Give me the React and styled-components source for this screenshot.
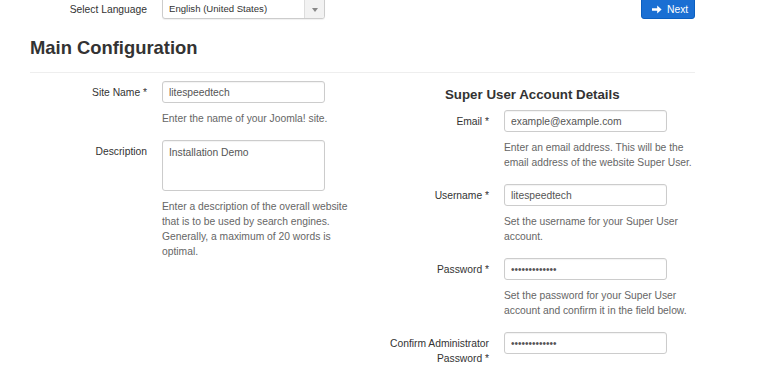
import React from "react";
import styled, { createGlobalStyle } from "styled-components";

const Global = createGlobalStyle`
  html, body { margin: 0; padding: 0; background: #fff; }
  body { font-family: "Liberation Sans", Arial, sans-serif; font-size: 10.3px; color: #333; overflow: hidden; }
  * { box-sizing: border-box; }
`;

const Page = styled.div`
  width: 770px;
  height: 380px;
  padding: 0 75px 0 30px;
  margin-top: -7px;
`;

const TopBar = styled.div`
  display: flex;
  justify-content: space-between;
  align-items: flex-end;
  height: 26px;
`;

const FieldRow = styled.div`
  display: grid;
  grid-template-columns: ${(p) => p.$labelW}px 163px;
  column-gap: 15px;
  align-items: start;
  margin-bottom: ${(p) => p.$mb ?? 14}px;
`;

const Label = styled.label`
  text-align: right;
  line-height: 15px;
  padding-top: ${(p) => p.$pt ?? 4}px;
  font-size: ${(p) => p.$fs ?? 10.3}px;
  color: #333;
`;

const SelectBox = styled.div`
  display: flex;
  height: 25px;
  border: 1px solid #ccc;
  border-radius: 3px;
  background: #fff;
  overflow: hidden;
  box-shadow: 0 1px 1px rgba(0,0,0,0.06);
`;

const SelectText = styled.div`
  flex: 1;
  padding: 7px 6px 0;
  font-size: 9.6px;
  color: #333;
  line-height: 14px;
`;

const SelectArrow = styled.div`
  width: 20px;
  background: #f2f2f2;
  border-left: 1px solid #ddd;
  display: flex;
  align-items: center;
  justify-content: center;
  padding-top: 6px;
`;

const NextButton = styled.button`
  display: flex;
  align-items: center;
  gap: 5px;
  height: 26px;
  width: 54px;
  padding: 6px 0 0 10px;
  border: 1px solid #0b5fc0;
  border-radius: 3px;
  background: #1a6fd3;
  color: #fff;
  font-family: "Liberation Sans", Arial, sans-serif;
  font-size: 10.3px;
`;

const Heading = styled.h1`
  margin: 19px 0 8px;
  font-size: 18.4px;
  line-height: 20px;
  font-weight: bold;
  color: #333;
  padding-bottom: 14px;
  border-bottom: 1px solid #eee;
`;

const Columns = styled.div`
  display: grid;
  grid-template-columns: 349px 316px;
`;

const Column = styled.div`
  padding-top: ${(p) => p.$pt ?? 0}px;
`;

const SubHeading = styled.h2`
  margin: 0 0 5px 66px;
  font-size: 13.3px;
  line-height: 20px;
  font-weight: bold;
  color: #333;
`;

const Field = styled.div`
  display: flex;
  flex-direction: column;
  gap: 8px;
`;

const TextInput = styled.input`
  width: 163px;
  height: 22px;
  padding: 0 6px;
  border: 1px solid #ccc;
  border-radius: 3px;
  font-family: "Liberation Sans", Arial, sans-serif;
  font-size: ${(p) => (p.type === "password" ? "10px" : "10.3px")};
  color: #555;
  box-shadow: inset 0 1px 1px rgba(0,0,0,0.05);
  outline: none;
`;

const TextArea = styled.textarea`
  width: 163px;
  height: 51px;
  padding: 4px 6px;
  border: 1px solid #ccc;
  border-radius: 3px;
  font-family: "Liberation Sans", Arial, sans-serif;
  font-size: 10.3px;
  line-height: 15px;
  color: #555;
  resize: none;
  box-shadow: inset 0 1px 1px rgba(0,0,0,0.05);
  outline: none;
`;

const Help = styled.div`
  width: 192px;
  line-height: 15px;
  color: #666;
`;

const ArrowIcon = () => (
  <svg width="10" height="9" viewBox="0 0 10 9">
    <path d="M0 3.3h5.2V0.6L9.6 4.5 5.2 8.4V5.7H0z" fill="#fff" />
  </svg>
);

const CaretIcon = () => (
  <svg width="6" height="4" viewBox="0 0 6 4">
    <path d="M0 0h6L3 4z" fill="#888" />
  </svg>
);

const Row = ({ labelW, label, children, mb, pt }) => (
  <FieldRow $labelW={labelW} $mb={mb}>
    <Label $pt={pt}>{label}</Label>
    <Field>{children}</Field>
  </FieldRow>
);

export default function App() {
  return (
    <>
      <Global />
      <Page>
        <TopBar>
          <FieldRow $labelW={117} $mb={0}>
            <Label $pt={8} $fs={10.3}>Select Language</Label>
            <SelectBox>
              <SelectText>English (United States)</SelectText>
              <SelectArrow><CaretIcon /></SelectArrow>
            </SelectBox>
          </FieldRow>
          <NextButton><ArrowIcon />Next</NextButton>
        </TopBar>
        <Heading>Main Configuration</Heading>
        <Columns>
          <Column>
            <Row labelW={117} label="Site Name *">
              <TextInput defaultValue="litespeedtech" />
              <Help>Enter the name of your Joomla! site.</Help>
            </Row>
            <Row labelW={117} label="Description">
              <TextArea defaultValue="Installation Demo" />
              <Help>Enter a description of the overall website that is to be used by search engines. Generally, a maximum of 20 words is optimal.</Help>
            </Row>
          </Column>
          <Column $pt={4}>
            <SubHeading>Super User Account Details</SubHeading>
            <Row labelW={110} label="Email *">
              <TextInput defaultValue="example@example.com" />
              <Help>Enter an email address. This will be the email address of the website Super User.</Help>
            </Row>
            <Row labelW={110} label="Username *">
              <TextInput defaultValue="litespeedtech" />
              <Help>Set the username for your Super User account.</Help>
            </Row>
            <Row labelW={110} label="Password *">
              <TextInput type="password" defaultValue="litespeedtech" />
              <Help>Set the password for your Super User account and confirm it in the field below.</Help>
            </Row>
            <Row labelW={110} label="Confirm Administrator Password *">
              <TextInput type="password" defaultValue="litespeedtech" />
            </Row>
          </Column>
        </Columns>
      </Page>
    </>
  );
}
